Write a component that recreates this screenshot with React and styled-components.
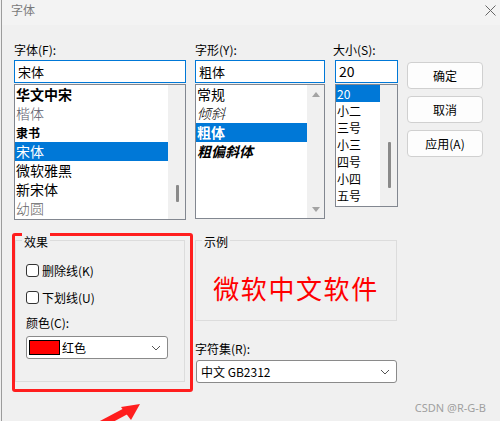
import React from 'react';
import styled, { createGlobalStyle, css } from 'styled-components';

const Global = createGlobalStyle`
  html, body { margin: 0; padding: 0; background: #f0f0f0; }
  body { font-family: "Noto Sans CJK SC", "Noto Sans", sans-serif; color: #000; }
  * { box-sizing: border-box; }
`;

const Dialog = styled.div`
  position: relative;
  width: 499px;
  height: 421px;
  margin-left: 1px;
  overflow: hidden;
  background: #f0f0f0;
  border-left: 1px solid #9c9c9c;
`;

const TitleBar = styled.div`
  height: 25px;
  background: #f3f3f3;
  display: flex;
  justify-content: space-between;
  align-items: flex-start;
  padding: 1px 4px 0 9px;
`;

const Title = styled.span`
  font-size: 12px;
  line-height: 17px;
  color: #7a7a7a;
`;

const CloseIcon = styled.svg`
  margin-top: 4px;
`;

const TopSection = styled.div`
  display: flex;
  align-items: flex-start;
  margin-top: 16px;
  padding-left: 12px;
`;

const Column = styled.div`
  display: flex;
  flex-direction: column;
  width: ${p => p.$w}px;
  margin-left: ${p => p.$ml || 0}px;
`;

const Label = styled.div`
  font-size: 12px;
  line-height: 17px;
  height: 17px;
  margin-bottom: 2px;
  margin-left: ${p => p.$ml || 0}px;
  white-space: nowrap;
`;

const Input = styled.div`
  height: 23px;
  border: 1px solid #0078d7;
  background: #fff;
  padding: 0 3px;
  font-size: ${p => p.$fs || 13}px;
  line-height: 21px;
  margin-bottom: 1px;
`;

const ListBox = styled.div`
  height: ${p => p.$h}px;
  border: 1px solid #828790;
  background: #fff;
  display: flex;
  overflow: hidden;
`;

const Items = styled.div`
  flex: 1;
  display: flex;
  flex-direction: column;
  min-width: 0;
`;

const Item = styled.div`
  height: ${p => p.$h}px;
  line-height: ${p => p.$h}px;
  padding-left: 1px;
  font-size: ${p => p.$fs || 14}px;
  white-space: nowrap;
  color: ${p => p.$color || '#000'};
  font-weight: ${p => p.$weight || 400};
  font-style: ${p => (p.$italic ? 'italic' : 'normal')};
  ${p => p.$selected && css`
    background: #0078d7;
    color: #fff;
  `}
`;

const Scrollbar = styled.div`
  width: 17px;
  background: #f0f0f0;
  position: relative;
  display: flex;
  flex-direction: column;
  align-items: center;
  justify-content: space-between;
  padding: 7px 0 6px;
`;

const Thumb = styled.div`
  position: absolute;
  left: 8px;
  width: 3px;
  border-radius: 1px;
  background: #8a8a8a;
`;

const Arrow = styled.div`
  width: 0;
  height: 0;
  border-left: 4px solid transparent;
  border-right: 4px solid transparent;
  ${p => (p.$down
    ? css`border-top: 5px solid #a3a3a3;`
    : css`border-bottom: 5px solid #a3a3a3;`)}
`;

const ButtonCol = styled.div`
  display: flex;
  flex-direction: column;
  gap: 7px;
  width: 76px;
  margin-left: 9px;
  padding-top: 21px;
`;

const Button = styled.div`
  height: 27px;
  border: 1px solid #d0d0d0;
  border-radius: 4px;
  background: #fdfdfd;
  font-size: 12px;
  display: flex;
  align-items: center;
  justify-content: center;
`;

const BottomSection = styled.div`
  display: flex;
  align-items: flex-start;
  margin-top: 13px;
  padding-left: 10px;
`;

const Highlight = styled.div`
  width: 181px;
  height: 159px;
  border: 3px solid #ff1e1e;
  border-radius: 3px;
  padding: 4px 5px 7px 0;
`;

const Group = styled.div`
  position: relative;
  width: ${p => p.$w}px;
  height: ${p => p.$h}px;
  border: 1px solid #dcdcdc;
  padding: ${p => p.$pad || '0'};
  display: flex;
  flex-direction: column;
  ${p => p.$center && css`
    align-items: center;
    justify-content: center;
  `}
`;

const Legend = styled.span`
  position: absolute;
  top: -8px;
  left: 6px;
  padding: 0 2px;
  background: #f0f0f0;
  font-size: 12px;
  line-height: 17px;
`;

const CheckRow = styled.label`
  display: flex;
  align-items: center;
  gap: 3px;
  height: 27px;
  font-size: 12px;
`;

const Box = styled.span`
  width: 13px;
  height: 13px;
  border: 1px solid #333;
  border-radius: 3px;
  background: #fff;
`;

const Select = styled.div`
  width: ${p => p.$w}px;
  height: 23px;
  border: 1px solid #8a8a8a;
  border-radius: 3px;
  background: #fff;
  display: flex;
  align-items: center;
  padding: 0 6px 0 ${p => p.$pl || 2}px;
  font-size: 12px;
  margin-left: ${p => p.$ml || 0}px;
`;

const Swatch = styled.span`
  width: 31px;
  height: 15px;
  background: #ff0000;
  border: 1px solid #000;
  margin-right: 2px;
`;

const Chevron = styled.svg`
  margin-left: auto;
`;

const RightCol = styled.div`
  display: flex;
  flex-direction: column;
  margin-left: 2px;
  padding-top: 7px;
`;

const SampleText = styled.div`
  color: #ff0000;
  font-family: "Noto Sans CJK SC", serif;
  font-size: 26px;
  letter-spacing: 1.6px;
  line-height: 30px;
  margin-top: 14px;
`;

const Watermark = styled.div`
  position: absolute;
  right: 14px;
  bottom: 6px;
  font-family: "Noto Sans", sans-serif;
  font-size: 11px;
  color: #a0a0a0;
`;

const ArrowMark = styled.svg`
  position: absolute;
  left: 90px;
  top: 398px;
`;

const fonts = [
  { t: '华文中宋', w: 700 },
  { t: '楷体', c: '#5a5a6a', w: 300 },
  { t: '隶书', w: 700, fs: 12 },
  { t: '宋体', sel: true },
  { t: '微软雅黑' },
  { t: '新宋体' },
  { t: '幼圆', c: '#666', w: 300 },
];

const styles = [
  { t: '常规' },
  { t: '倾斜', i: true, w: 300 },
  { t: '粗体', w: 700, sel: true },
  { t: '粗偏斜体', w: 700, i: true },
];

const sizes = ['20', '小二', '三号', '小三', '四号', '小四', '五号'];

const ChevronDown = () => (
  <Chevron width="10" height="6" viewBox="0 0 10 6">
    <path d="M1 1 L5 5 L9 1" fill="none" stroke="#555" strokeWidth="1" />
  </Chevron>
);

export default function App() {
  return (
    <Dialog>
      <Global />
      <TitleBar>
        <Title>字体</Title>
        <CloseIcon width="11" height="11" viewBox="0 0 11 11">
          <path d="M0.5 0.5 L10.5 10.5 M10.5 0.5 L0.5 10.5" stroke="#666" strokeWidth="1" />
        </CloseIcon>
      </TitleBar>

      <TopSection>
        <Column $w={172}>
          <Label>字体(F):</Label>
          <Input>宋体</Input>
          <ListBox $h={136}>
            <Items>
              {fonts.map(f => (
                <Item key={f.t} $h={19} $fs={f.fs} $weight={f.w} $color={f.c} $selected={f.sel}>{f.t}</Item>
              ))}
            </Items>
            <Scrollbar>
              <Thumb style={{ top: 100, height: 17 }} />
            </Scrollbar>
          </ListBox>
        </Column>

        <Column $w={130} $ml={9}>
          <Label>字形(Y):</Label>
          <Input>粗体</Input>
          <ListBox $h={135}>
            <Items>
              {styles.map(s => (
                <Item key={s.t} $h={19} $weight={s.w} $italic={s.i} $selected={s.sel}>{s.t}</Item>
              ))}
            </Items>
            <Scrollbar>
              <Arrow />
              <Arrow $down />
            </Scrollbar>
          </ListBox>
        </Column>

        <Column $w={63} $ml={10}>
          <Label $ml={-2}>大小(S):</Label>
          <Input $fs={14}>20</Input>
          <ListBox $h={123}>
            <Items>
              {sizes.map((s, i) => (
                <Item key={s} $h={17} $fs={12} $selected={i === 0}>{s}</Item>
              ))}
            </Items>
            <Scrollbar>
              <Thumb style={{ top: 57, height: 46 }} />
            </Scrollbar>
          </ListBox>
        </Column>

        <ButtonCol>
          <Button>确定</Button>
          <Button>取消</Button>
          <Button>应用(A)</Button>
        </ButtonCol>
      </TopSection>

      <BottomSection>
        <Highlight>
          <Group $w={170} $h={142} $pad="16px 0 0 10px">
            <Legend>效果</Legend>
            <CheckRow><Box />删除线(K)</CheckRow>
            <CheckRow><Box />下划线(U)</CheckRow>
            <Label style={{ marginTop: 3, marginBottom: 5 }}>颜色(C):</Label>
            <Select $w={142}>
              <Swatch />
              红色
              <ChevronDown />
            </Select>
          </Group>
        </Highlight>

        <RightCol>
          <Group $w={202} $h={81} $center>
            <Legend>示例</Legend>
            <SampleText>微软中文软件</SampleText>
          </Group>
          <Label style={{ marginTop: 19, marginBottom: 3 }}>字符集(R):</Label>
          <Select $w={201} $ml={1} $pl={4}>
            中文 GB2312
            <ChevronDown />
          </Select>
        </RightCol>
      </BottomSection>

      <Watermark>CSDN @R-G-B</Watermark>

      <ArrowMark width="60" height="23" viewBox="0 0 60 23">
        <path d="M6 28 L36 12" stroke="#ff1e1e" strokeWidth="7" fill="none" />
        <polygon points="48,6 29,9 39,22" fill="#ff1e1e" />
      </ArrowMark>
    </Dialog>
  );
}
